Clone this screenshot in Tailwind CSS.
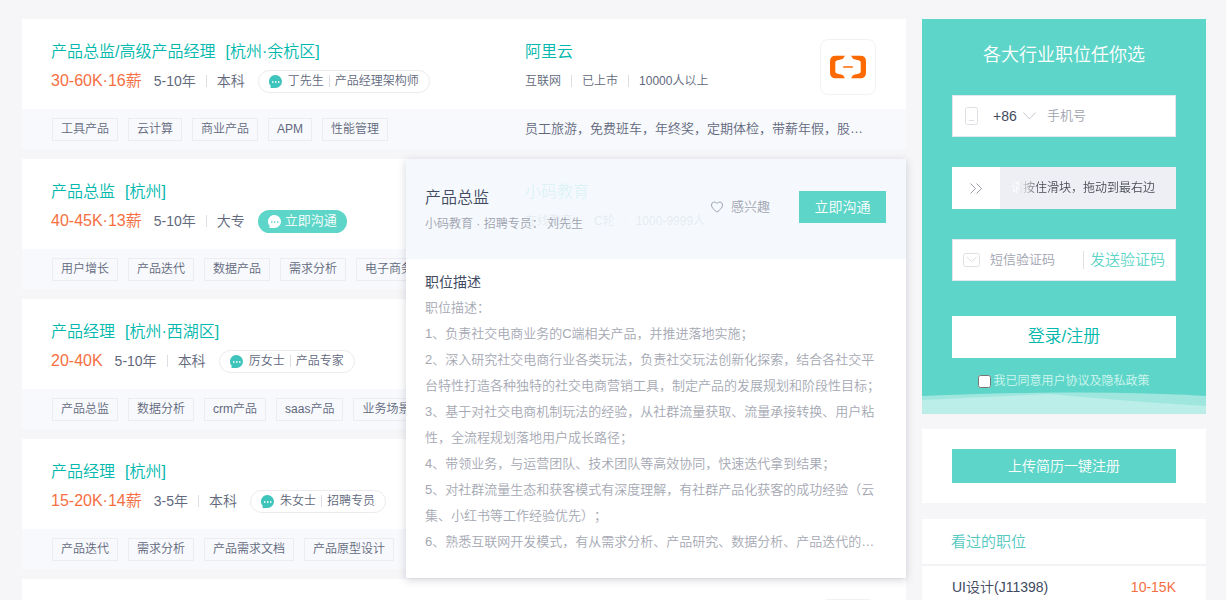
<!DOCTYPE html>
<html lang="zh-CN">
<head>
<meta charset="utf-8">
<title>职位列表</title>
<script src="https://cdn.jsdelivr.net/npm/@tailwindcss/browser@4"></script>
</head>
<body class="h-screen overflow-hidden bg-[#f6f6f8] font-['Liberation_Sans','Noto_Sans_CJK_SC',sans-serif] font-[350] text-[#61687c] [text-spacing-trim:space-all]">
<svg class="hidden">
  <symbol id="chat" viewBox="0 0 14 14"><path fill="currentColor" d="M7 0a7 7 0 1 1 0 14H1.6l.2-2.3A7 7 0 0 1 7 0Z"/></symbol>
</svg>
<div class="flex items-start gap-4 pt-[19px] pr-5 pl-[22px]">

  <main class="flex min-w-0 flex-1 flex-col gap-2.5">
    <article class="bg-white">
      <div class="flex h-[90px] pl-[29px] pt-[17px]">
        <div class="w-[474px] shrink-0">
          <h3 class="flex gap-2.5 text-base leading-8 text-[#00b8ac]"><a href="#">产品总监/高级产品经理</a><span>[杭州·余杭区]</span></h3>
          <div class="flex h-[26px] items-center text-sm">
            <span class="mr-3 text-base text-[#f56f42]">30-60K·16薪</span>
            <span>5-10年</span><i class="mx-2.5 h-3 w-px bg-[#dcdee3]"></i><span>本科</span>
            <button class="ml-[13px] flex h-[23px] items-center rounded-full border border-[#ebebef] px-2.5 text-xs">
              <svg class="mr-1.5 size-[13px] text-[#3fc4bc]"><use href="#chat"/><path d="M3 7h1.5M6 7h1.5M9 7h1.5" stroke="#fff" stroke-width="1.3"/></svg>
              <span>丁先生</span><i class="mx-[5px] h-3 w-px bg-[#dcdee3]"></i><span>产品经理架构师</span>
            </button>
          </div>
        </div>
        <div class="min-w-0 flex-1">
          <h3 class="text-base leading-8 text-[#00b8ac]"><a href="#">阿里云</a></h3>
          <div class="flex h-[26px] items-center text-xs">
            <span>互联网</span><i class="mx-2.5 h-3 w-px bg-[#dcdee3]"></i><span>已上市</span><i class="mx-2.5 h-3 w-px bg-[#dcdee3]"></i><span>10000人以上</span>
          </div>
        </div>
        <a href="#" aria-label="阿里云" class="mt-[3px] mr-[30px] flex size-14 items-center justify-center rounded-lg border border-[#f2f2f5]">
          <svg class="h-6 w-[38px]" viewBox="0 0 38 24"><path fill="#ff6a00" d="M16 .7H6.500Q1 .7 1 6.500v11Q1 23.300 6.500 23.300H16l-2.200-3.200-6-1.700Q6.300 18 6.300 16.400V7.600Q6.300 6 7.800 5.600l6-1.700ZM22 .7h9.500Q37 .7 37 6.500v11q0 5.800-5.500 5.800H22l2.200-3.200 6-1.700q1.500-.4 1.500-2V7.600q0-1.600-1.500-2l-6-1.700ZM14.200 11.200h9.600v1.500h-9.600Z"/></svg>
        </a>
      </div>
      <div class="flex h-10 items-center bg-[#f8f9fd] pl-[30px]">
        <ul class="flex w-[473px] shrink-0 gap-2.5 text-xs leading-[21px] whitespace-nowrap">
          <li class="border border-[#ececf1] px-2">工具产品</li><li class="border border-[#ececf1] px-2">云计算</li><li class="border border-[#ececf1] px-2">商业产品</li><li class="border border-[#ececf1] px-2">APM</li><li class="border border-[#ececf1] px-2">性能管理</li>
        </ul>
        <p class="mr-10 min-w-0 truncate text-[13px]">员工旅游，免费班车，年终奖，定期体检，带薪年假，股…</p>
      </div>
    </article>

    <article class="relative bg-white">
      <div class="flex h-[90px] pl-[29px] pt-[17px]">
        <div class="w-[474px] shrink-0">
          <h3 class="flex gap-2.5 text-base leading-8 text-[#00b8ac]"><a href="#">产品总监</a><span>[杭州]</span></h3>
          <div class="flex h-[26px] items-center text-sm">
            <span class="mr-3 text-base text-[#f56f42]">40-45K·13薪</span>
            <span>5-10年</span><i class="mx-2.5 h-3 w-px bg-[#dcdee3]"></i><span>大专</span>
            <button class="ml-[13px] flex h-[23px] items-center gap-1 rounded-full bg-[#5dd5c8] px-2.5 text-[13px] text-white">
              <svg class="size-[13px] text-white"><use href="#chat"/><path d="M3 7h1.500M6 7h1.500M9 7h1.500" stroke="#5dd5c8" stroke-width="1.300"/></svg>
              <span>立即沟通</span>
            </button>
          </div>
        </div>
        <div class="min-w-0 flex-1">
          <h3 class="text-base leading-8 text-[#00b8ac]"><a href="#">小码教育</a></h3>
          <div class="flex h-[26px] items-center text-xs">
            <span>在线教育</span><i class="mx-2.5 h-3 w-px bg-[#dcdee3]"></i><span>C轮</span><i class="mx-2.5 h-3 w-px bg-[#dcdee3]"></i><span>1000-9999人</span>
          </div>
        </div>
      </div>
      <div class="flex h-10 items-center bg-[#f8f9fd] pl-[30px]">
        <ul class="flex gap-2.5 text-xs leading-[21px] whitespace-nowrap">
          <li class="border border-[#ececf1] px-2">用户增长</li><li class="border border-[#ececf1] px-2">产品迭代</li><li class="border border-[#ececf1] px-2">数据产品</li><li class="border border-[#ececf1] px-2">需求分析</li><li class="border border-[#ececf1] px-2">电子商务</li>
        </ul>
      </div>

      <!-- Job detail popover -->
      <section class="absolute top-0 right-0 z-10 w-[500px] shadow-[0_2px_8px_rgba(60,65,85,0.22)]">
        <header class="flex h-[100px] items-start bg-[#f4f8fd]/90 pt-[26px] pr-5 pl-[19px]">
          <div class="flex-1">
            <h4 class="text-base leading-[26px] text-[#414a60]">产品总监</h4>
            <p class="text-xs leading-[26px] text-[#9fa3b0]">小码教育 · 招聘专员： 刘先生</p>
          </div>
          <button class="mt-1.5 mr-[29px] flex h-8 items-center gap-2 text-[13px] text-[#9fa3b0]">
            <svg class="size-3" viewBox="0 0 12 12" fill="none" stroke="currentColor"><path d="M6 11.200C3 8.800.5 6.700.5 4A2.900 2.900 0 0 1 6 2.600 2.900 2.900 0 0 1 11.500 4c0 2.700-2.500 4.800-5.500 7.200Z"/></svg>
            感兴趣
          </button>
          <button class="mt-1.5 h-8 w-[87px] bg-[#5dd5c8] text-sm text-white">立即沟通</button>
        </header>
        <div class="bg-white pt-2.5 pr-5 pb-[23px] pl-[19px] text-[13px] leading-[26px] text-[#a5a8b3]">
          <h4 class="text-sm leading-[26px] font-normal text-[#414a60]">职位描述</h4>
          <p>职位描述：</p>
          <p>1、负责社交电商业务的C端相关产品，并推进落地实施；</p>
          <p>2、深入研究社交电商行业各类玩法，负责社交玩法创新化探索，结合各社交平台特性打造各种独特的社交电商营销工具，制定产品的发展规划和阶段性目标；</p>
          <p>3、基于对社交电商机制玩法的经验，从社群流量获取、流量承接转换、用户粘性，全流程规划落地用户成长路径；</p>
          <p>4、带领业务，与运营团队、技术团队等高效协同，快速迭代拿到结果；</p>
          <p>5、对社群流量生态和获客模式有深度理解，有社群产品化获客的成功经验（云集、小红书等工作经验优先）；</p>
          <p>6、熟悉互联网开发模式，有从需求分析、产品研究、数据分析、产品迭代的…</p>
        </div>
      </section>
    </article>

    <article class="bg-white">
      <div class="h-[90px] pl-[29px] pt-[17px]">
        <h3 class="flex gap-2.5 text-base leading-8 text-[#00b8ac]"><a href="#">产品经理</a><span>[杭州·西湖区]</span></h3>
        <div class="flex h-[26px] items-center text-sm">
          <span class="mr-3 text-base text-[#f56f42]">20-40K</span>
          <span>5-10年</span><i class="mx-2.5 h-3 w-px bg-[#dcdee3]"></i><span>本科</span>
          <button class="ml-[13px] flex h-[23px] items-center rounded-full border border-[#ebebef] px-2.5 text-xs">
            <svg class="mr-1.5 size-[13px] text-[#3fc4bc]"><use href="#chat"/><path d="M3 7h1.500M6 7h1.500M9 7h1.500" stroke="#fff" stroke-width="1.300"/></svg>
            <span>厉女士</span><i class="mx-[5px] h-3 w-px bg-[#dcdee3]"></i><span>产品专家</span>
          </button>
        </div>
      </div>
      <div class="flex h-10 items-center bg-[#f8f9fd] pl-[30px]">
        <ul class="flex gap-2.5 text-xs leading-[21px] whitespace-nowrap">
          <li class="border border-[#ececf1] px-2">产品总监</li><li class="border border-[#ececf1] px-2">数据分析</li><li class="border border-[#ececf1] px-2">crm产品</li><li class="border border-[#ececf1] px-2">saas产品</li><li class="border border-[#ececf1] px-2">业务场景</li>
        </ul>
      </div>
    </article>

    <article class="bg-white">
      <div class="h-[90px] pl-[29px] pt-[17px]">
        <h3 class="flex gap-2.5 text-base leading-8 text-[#00b8ac]"><a href="#">产品经理</a><span>[杭州]</span></h3>
        <div class="flex h-[26px] items-center text-sm">
          <span class="mr-3 text-base text-[#f56f42]">15-20K·14薪</span>
          <span>3-5年</span><i class="mx-2.5 h-3 w-px bg-[#dcdee3]"></i><span>本科</span>
          <button class="ml-[13px] flex h-[23px] items-center rounded-full border border-[#ebebef] px-2.5 text-xs">
            <svg class="mr-1.5 size-[13px] text-[#3fc4bc]"><use href="#chat"/><path d="M3 7h1.500M6 7h1.500M9 7h1.500" stroke="#fff" stroke-width="1.300"/></svg>
            <span>朱女士</span><i class="mx-[5px] h-3 w-px bg-[#dcdee3]"></i><span>招聘专员</span>
          </button>
        </div>
      </div>
      <div class="flex h-10 items-center bg-[#f8f9fd] pl-[30px]">
        <ul class="flex gap-2.5 text-xs leading-[21px] whitespace-nowrap">
          <li class="border border-[#ececf1] px-2">产品迭代</li><li class="border border-[#ececf1] px-2">需求分析</li><li class="border border-[#ececf1] px-2">产品需求文档</li><li class="border border-[#ececf1] px-2">产品原型设计</li>
        </ul>
      </div>
    </article>

    <article class="flex justify-end bg-white pt-5 pr-[30px]">
      <div class="size-14 rounded-lg border border-[#f2f2f5]"></div>
    </article>
  </main>

  <aside class="w-[284px] shrink-0">
    <form class="bg-[#5dd5c8] pt-5">
      <div class="flex flex-col px-[30px]">
        <h2 class="text-center text-lg leading-8 text-white">各大行业职位任你选</h2>
        <div class="mt-6 flex h-[42px] items-center border border-[#e3e7ed] bg-white">
          <svg class="ml-3 h-[18px] w-[13px] shrink-0" fill="none" stroke="#dfe0e6"><rect x=".5" y=".5" width="12" height="17" rx="2"/><path d="M4 13.500h5"/></svg>
          <select aria-label="国家代码" class="ml-[15px] w-6 shrink-0 appearance-none text-sm text-[#414a60]"><option>+86</option></select>
          <svg class="ml-1.5 h-2 w-[13px] shrink-0" fill="none" stroke="#c5c8d1"><path d="M.5.5l6 6.500 6-6.500"/></svg>
          <input type="tel" aria-label="手机号" placeholder="手机号" class="ml-[11px] w-full min-w-0 text-[13px] outline-none placeholder:text-[#9fa3b0]">
        </div>
        <div class="mt-[30px] flex h-[42px] bg-[#eeeff5]">
          <button type="button" aria-label="滑块" class="flex w-12 items-center justify-center bg-white"><svg class="h-[11px] w-3" fill="none" stroke="#999ca6"><path d="M.5.5l5 5-5 5M6.500.5l5 5-5 5"/></svg></button>
          <p class="ml-[11px] self-center bg-linear-to-r from-white from-5% to-[#44464d] to-20% bg-clip-text text-xs text-transparent">请按住滑块，拖动到最右边</p>
        </div>
        <div class="mt-[30px] flex h-[42px] items-center border border-[#e3e7ed] bg-white">
          <svg class="ml-2.5 h-[14px] w-[17px] shrink-0" fill="none" stroke="#dfe0e6"><rect x=".5" y=".5" width="16" height="13" rx="2"/><path d="M3.500 4l5 4.500 5-4.500"/></svg>
          <input type="text" aria-label="短信验证码" placeholder="短信验证码" class="ml-2.5 w-full min-w-0 text-[13px] outline-none placeholder:text-[#9fa3b0]">
          <button type="button" class="mr-2.5 h-[18px] shrink-0 border-l border-[#dfe0e6] pl-1.5 text-[15px] leading-[18px] text-[#5dd5c8]">发送验证码</button>
        </div>
        <button class="mt-[35px] h-[42px] bg-white text-[17px] text-[#00b8ac]">登录/注册</button>
        <label class="mt-3.5 flex items-center justify-center gap-0.5 text-xs leading-[18px] text-[#d4f5f1]"><input type="checkbox" class="size-[13px]">我已同意用户协议及隐私政策</label>
      </div>
      <svg class="mt-0.5 block h-[22px] w-full" viewBox="0 0 284 22" preserveAspectRatio="none"><path fill="#9fe7de" d="M0 4Q75 1 142 0.500 220 0 284 4V22H0Z"/><path fill="#bbeee8" d="M0 8Q60 5 128 2 200 9 284 14V22H0Z"/></svg>
    </form>
    <div class="mt-[15px] bg-white px-[30px] py-5">
      <button class="h-[34px] w-full bg-[#5dd5c8] text-sm text-white">上传简历一键注册</button>
    </div>
    <section class="mt-4 bg-white">
      <h3 class="border-b-2 border-[#f3f3f6] px-[29px] text-[15px] leading-[45px] text-[#53c8bf]">看过的职位</h3>
      <a href="#" class="flex justify-between px-[30px] text-sm leading-[42px] text-[#414a60]"><span>UI设计(J11398)</span><span class="text-[#f56f42]">10-15K</span></a>
    </section>
  </aside>
</div>
</body>
</html>
